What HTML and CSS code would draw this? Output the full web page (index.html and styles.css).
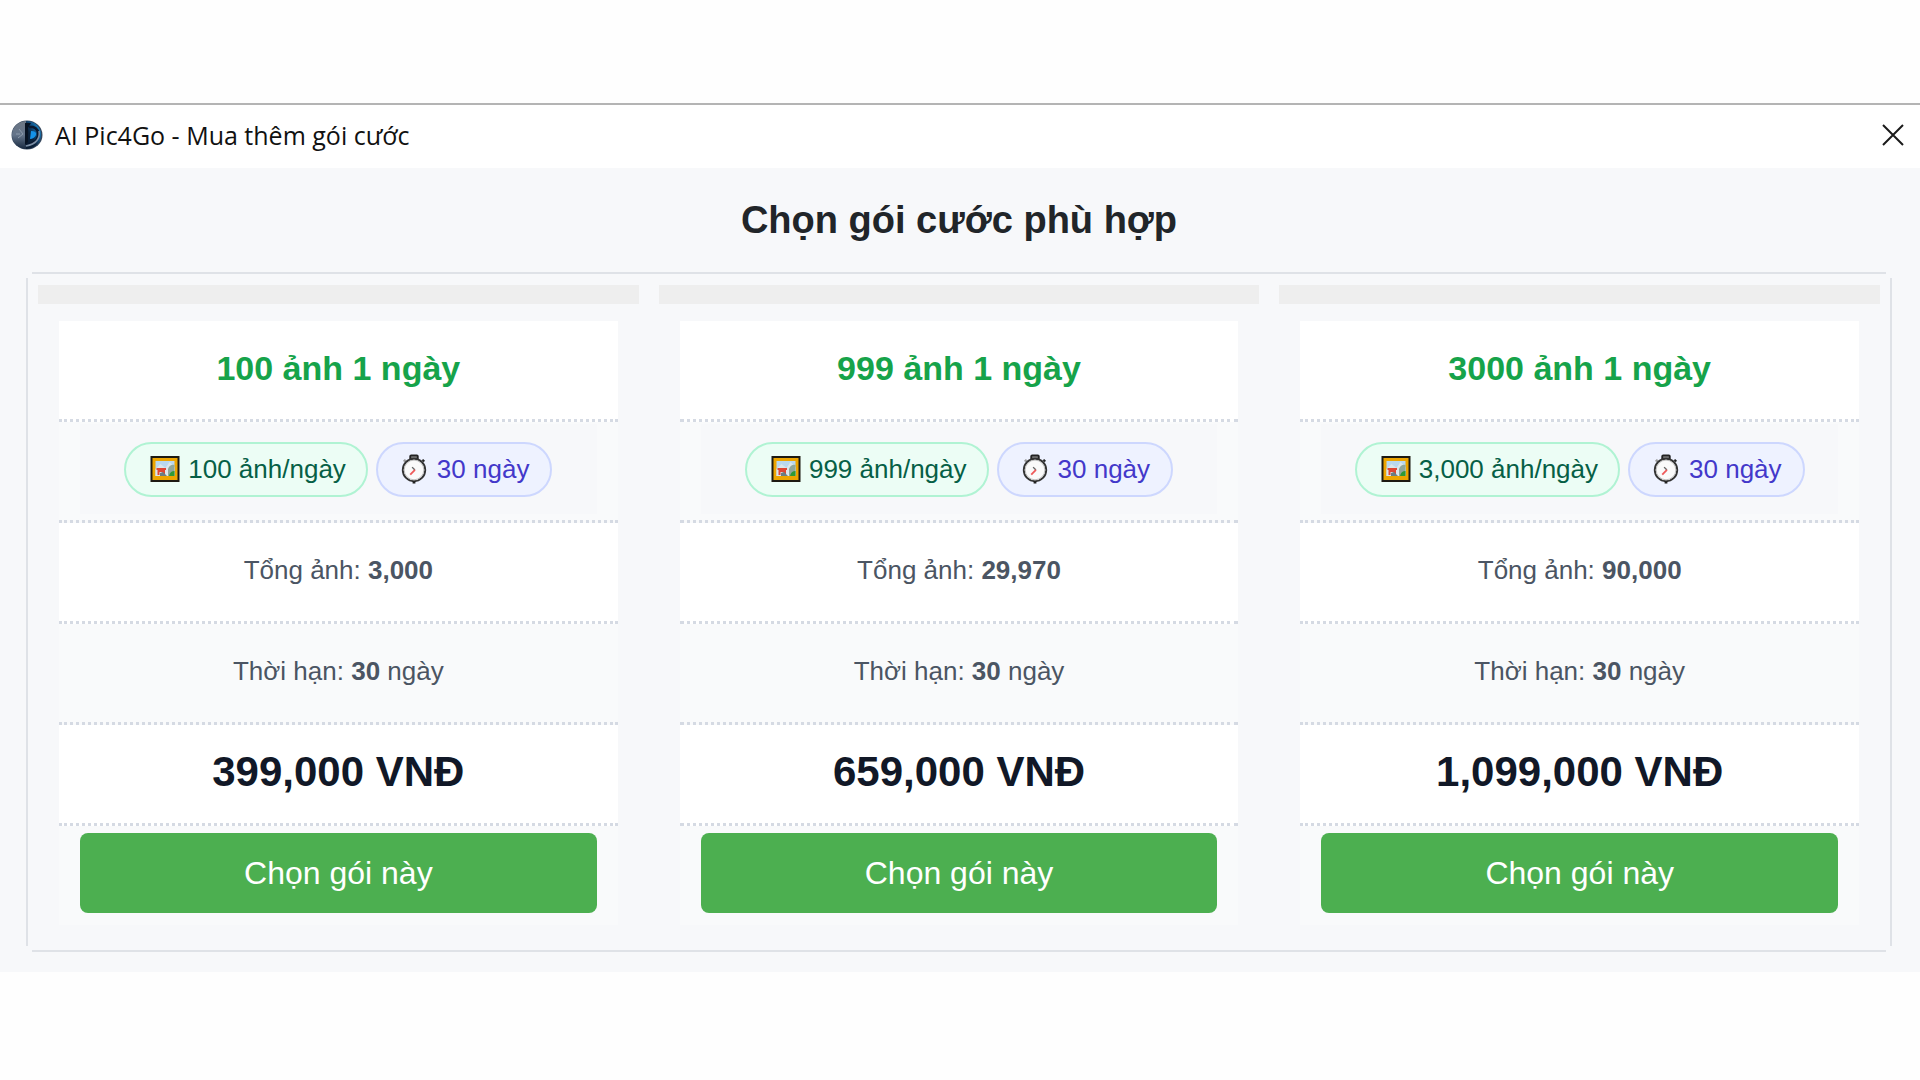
FILE: index.html
```html
<!DOCTYPE html>
<html lang="vi">

<head>
    <meta charset="UTF-8">
    <meta name="viewport" content="width=device-width, initial-scale=1.0">
    <title>AI Pic4Go - Mua thêm gói cước</title>
    <link rel="stylesheet" href="styles.css">
</head>

<body>
    <!-- icons -->
    <svg class="icons" width="0" height="0" aria-hidden="true">
        <symbol id="picture" viewBox="0 0 30 28">
            <rect x="0.5" y="1" width="29" height="26" fill="#1d1a12" />
            <rect x="2.5" y="3" width="25" height="22" fill="#eda500" />
            <rect x="5.5" y="6" width="19" height="15" fill="#b9d8ee" />
            <path d="M5.5 14l5-5 5 4 4-6 5 5v9h-19z" fill="#dce6ea" />
            <path d="M18 21v-7q2-5 6.500-4v11z" fill="#8fa79c" />
            <path d="M19 21q1-5 5.500-5v5z" fill="#2f9a35" />
            <path d="M6.500 13h9.500v2h-1v5h-2.500v-3h-3v3H7.500v-5h-1z" fill="#e04634" />
            <path d="M10 18l3-1 4 4h-7z" fill="#6b7d84" />
        </symbol>
        <symbol id="clock" viewBox="0 0 30 32">
            <path d="M11 6V2.500q0-1 1-1h6q1 0 1 1V6" fill="#777" stroke="#222" stroke-width="2" />
            <path d="M24 6l2 2" stroke="#222" stroke-width="2" />
            <path d="M6 6l-2 2" stroke="#999" stroke-width="2" />
            <circle cx="15" cy="17" r="12" fill="#fafafa" stroke="#333" stroke-width="2" />
            <circle cx="15" cy="17" r="10.500" fill="none" stroke="#bbb" stroke-width="1" />
            <path d="M13 14l3 3" stroke="#666" stroke-width="1.500" />
            <path d="M16 17l-5 5" stroke="#ee5a5a" stroke-width="2" />
            <path d="M15 29v2.500" stroke="#222" stroke-width="3" />
        </symbol>
    </svg>

    <div class="window">
        <header class="titlebar">
            <svg class="logo" viewBox="0 0 32 30" aria-hidden="true">
                <defs>
                    <linearGradient id="left" x1="0" y1="0" x2="0" y2="1">
                        <stop offset="0" stop-color="#6d7784" />
                        <stop offset="0.5" stop-color="#64748a" />
                        <stop offset="1" stop-color="#17283f" />
                    </linearGradient>
                    <linearGradient id="right" x1="1" y1="0" x2="0" y2="1">
                        <stop offset="0" stop-color="#22b4fa" />
                        <stop offset="0.35" stop-color="#12588f" />
                        <stop offset="0.6" stop-color="#0b223c" />
                        <stop offset="1" stop-color="#091a30" />
                    </linearGradient>
                </defs>
                <ellipse cx="16" cy="15" rx="15.500" ry="14.500" fill="#33455c" />
                <path d="M16 1a15 14 0 0 0 0 28z" fill="url(#left)" />
                <path d="M15 1a15 14 0 0 1 0 28z" fill="url(#right)" />
                <path d="M14 3h6l-3 5v14l-3 3z" fill="#071222" />
                <path d="M18 7h4q6 2 5 9t-12 9" fill="none" stroke="#0a1930" stroke-width="2.500" />
                <path d="M28 11q2 12-13 15" fill="none" stroke="#7c8fa5" stroke-width="1.500" />
                <path d="M20 11q6 0 5 4-2 4-6 4z" fill="#1592e8" />
                <path d="M8 9l4 5-5 4M5 14h4" fill="none" stroke="#8d9bab" stroke-width="1" />
            </svg>
            <span class="caption">AI Pic4Go - Mua thêm gói cước</span>
            <button class="close" type="button" aria-label="Đóng">
                <svg viewBox="0 0 22 22" width="22" height="22" aria-hidden="true">
                    <path d="M1 1l20 20M21 1L1 21" stroke="#1a1a1a" stroke-width="2" />
                </svg>
            </button>
        </header>

        <main class="content">
            <h1>Chọn gói cước phù hợp</h1>
            <div class="plans">
                <section class="plan">
                    <div class="strip"></div>
                    <div class="card">
                        <h2 class="row name">100 ảnh 1 ngày</h2>
                        <div class="row">
                            <div class="badges">
                                <span class="badge green"><svg><use href="#picture" /></svg>100 ảnh/ngày</span>
                                <span class="badge blue"><svg><use href="#clock" /></svg>30 ngày</span>
                            </div>
                        </div>
                        <p class="row">Tổng ảnh:&nbsp;<b>3,000</b></p>
                        <p class="row">Thời hạn:&nbsp;<b>30</b>&nbsp;ngày</p>
                        <p class="row price">399,000 VNĐ</p>
                        <div class="action"><button type="button">Chọn gói này</button></div>
                    </div>
                </section>
                <section class="plan">
                    <div class="strip"></div>
                    <div class="card">
                        <h2 class="row name">999 ảnh 1 ngày</h2>
                        <div class="row">
                            <div class="badges">
                                <span class="badge green"><svg><use href="#picture" /></svg>999 ảnh/ngày</span>
                                <span class="badge blue"><svg><use href="#clock" /></svg>30 ngày</span>
                            </div>
                        </div>
                        <p class="row">Tổng ảnh:&nbsp;<b>29,970</b></p>
                        <p class="row">Thời hạn:&nbsp;<b>30</b>&nbsp;ngày</p>
                        <p class="row price">659,000 VNĐ</p>
                        <div class="action"><button type="button">Chọn gói này</button></div>
                    </div>
                </section>
                <section class="plan">
                    <div class="strip"></div>
                    <div class="card">
                        <h2 class="row name">3000 ảnh 1 ngày</h2>
                        <div class="row">
                            <div class="badges">
                                <span class="badge green"><svg><use href="#picture" /></svg>3,000 ảnh/ngày</span>
                                <span class="badge blue"><svg><use href="#clock" /></svg>30 ngày</span>
                            </div>
                        </div>
                        <p class="row">Tổng ảnh:&nbsp;<b>90,000</b></p>
                        <p class="row">Thời hạn:&nbsp;<b>30</b>&nbsp;ngày</p>
                        <p class="row price">1,099,000 VNĐ</p>
                        <div class="action"><button type="button">Chọn gói này</button></div>
                    </div>
                </section>
            </div>
        </main>
    </div>
</body>

</html>
```
FILE: styles.css
```css
* {
    box-sizing: border-box;
}

body {
    margin: 0;
    background: #fefefe;
    font-family: "Liberation Sans", Arial, sans-serif;
}

h1,
h2,
p {
    margin: 0;
}

.icons {
    position: absolute;
}

.window {
    margin-top: 103px;
    border-top: 2px solid #b4b4b4;
    background: #f7f8fa;
}

/* title bar */
.titlebar {
    display: flex;
    align-items: center;
    height: 63px;
    padding: 0 16px 4px 11px;
    background: #fff;
}

.logo {
    width: 32px;
    height: 30px;
}

.caption {
    margin-left: 12px;
    color: #111;
    font-family: "Open Sans", "Noto Sans", sans-serif;
    font-size: 25px;
}

.close {
    display: flex;
    margin-left: auto;
    padding: 0;
    border: none;
    background: none;
}

/* content */
.content {
    padding: 30px 28px 20px 26px;
}

h1 {
    color: #212529;
    font-size: 38px;
    line-height: 44px;
    text-align: center;
}

/* four separate lines, the corners stay open */
.plans {
    --line: linear-gradient(#dfe2e7, #dfe2e7);
    display: flex;
    gap: 20px;
    margin-top: 30px;
    padding: 13px 12px 27px;
    background:
        var(--line) top / calc(100% - 12px) 2px no-repeat,
        var(--line) bottom / calc(100% - 12px) 2px no-repeat,
        var(--line) left / 2px calc(100% - 12px) no-repeat,
        var(--line) right / 2px calc(100% - 12px) no-repeat;
}

.plan {
    flex: 1;
}

.strip {
    height: 19px;
    background: #eee;
}

.card {
    margin: 17px 21px 0;
    background: #f9fafb;
}

.row {
    display: flex;
    justify-content: center;
    align-items: center;
    height: 101px;
    padding: 0 21px 4px;
    border-bottom: 3px dotted #d5dae3;
    color: #4b5563;
    font-size: 26px;
}

.row:nth-child(odd) {
    background: #fff;
}

.name {
    color: #16a34a;
    font-size: 34px;
}

.price {
    color: #111827;
    font-size: 42px;
    font-weight: bold;
}

.badges {
    display: flex;
    flex: 1;
    justify-content: center;
    align-items: center;
    gap: 8px;
    height: 90px;
    background: #f7f8fa;
}

.badge {
    display: flex;
    align-items: center;
    gap: 8px;
    height: 55px;
    border: 2px solid;
    border-radius: 28px;
}

.badge svg {
    width: 30px;
    height: 30px;
}

.green {
    padding: 0 20px 0 24px;
    border-color: #b0f3d3;
    background: #ecfdf5;
    color: #065f46;
}

.blue {
    padding: 0 21px;
    border-color: #cdd7fe;
    background: #eef2ff;
    color: #4338ca;
}

.action {
    padding: 7px 21px 12px;
}

.action button {
    width: 100%;
    height: 80px;
    border: none;
    border-radius: 8px;
    background: #4caf50;
    color: #fff;
    font-family: inherit;
    font-size: 32px;
}
```
